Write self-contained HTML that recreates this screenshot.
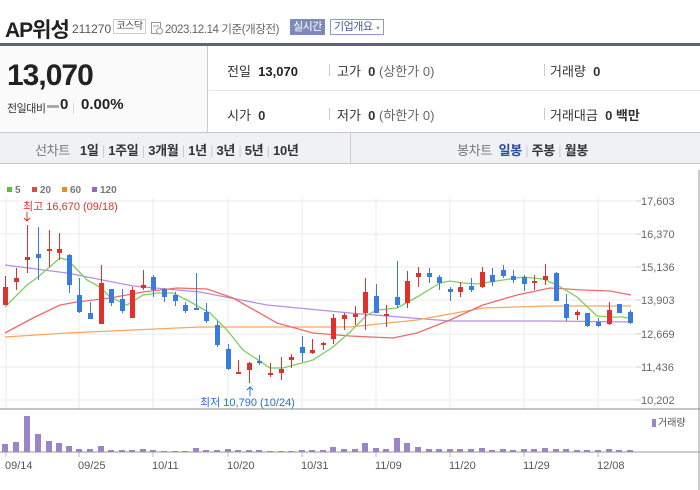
<!DOCTYPE html>
<html><head><meta charset="utf-8"><style>
*{margin:0;padding:0;box-sizing:border-box}
body{width:700px;height:490px;background:#fff;font-family:"Liberation Sans","Noto Sans CJK KR",sans-serif;position:relative;overflow:hidden;color:#333}
.a{position:absolute;white-space:nowrap}
</style></head><body>
<div class="a" style="left:5px;top:14px;font-size:21px;font-weight:bold;color:#222;letter-spacing:-1px">AP위성</div>
<div class="a" style="left:72px;top:22px;font-size:12px;color:#555">211270</div>
<div class="a" style="left:113px;top:19px;width:33px;height:15px;border:1px solid #ccc;font-size:10px;color:#444;text-align:center;line-height:13px;letter-spacing:-0.5px">코스닥</div>
<svg class="a" style="left:151px;top:22px" width="12" height="13"><rect x="0.5" y="0.5" width="9" height="11" fill="none" stroke="#999"/><line x1="2" y1="4" x2="8" y2="4" stroke="#999"/><circle cx="8.5" cy="9" r="3" fill="#fff" stroke="#999"/></svg>
<div class="a" style="left:165px;top:21px;font-size:11.5px;color:#666;letter-spacing:-0.4px">2023.12.14 기준(개장전)</div>
<div class="a" style="left:290px;top:19px;width:35px;height:16px;background:#7d8bbc;color:#fff;font-size:11px;text-align:center;line-height:16px;letter-spacing:-0.5px">실시간</div>
<div class="a" style="left:330px;top:19px;width:54px;height:16px;border:1px solid #8c9bc8;color:#4a5a9a;font-size:11px;line-height:14px;padding-left:3px;letter-spacing:-0.5px">기업개요 <span style="font-size:6px;color:#99a">▼</span></div>
<div class="a" style="left:0;top:43px;width:700px;height:3px;background:#5f6470"></div>
<div class="a" style="left:0;top:46px;width:208px;height:86px;background:#fafafa;border-right:1px solid #ccc"></div>
<div class="a" style="left:7px;top:59px;font-size:30px;font-weight:bold;color:#222;letter-spacing:-1px">13,070</div>
<div class="a" style="left:7px;top:100px;font-size:11px;color:#333;letter-spacing:-0.5px">전일대비</div>
<div class="a" style="left:47px;top:105px;width:12px;height:3px;background:#aaa"></div>
<div class="a" style="left:60px;top:96px;font-size:15px;font-weight:bold;color:#222">0</div>
<div class="a" style="left:73px;top:103px;width:1px;height:11px;background:#ddd"></div>
<div class="a" style="left:81px;top:96px;font-size:15px;font-weight:bold;color:#222">0.00%</div>
<div class="a" style="left:209px;top:90px;width:491px;height:1px;background:#e4e4e4"></div>
<div class="a" style="left:227px;top:61px;font-size:13px;color:#333">전일 &nbsp;<b style="color:#222">13,070</b></div>
<div class="a" style="left:329px;top:64px;width:1px;height:12px;background:#ccc"></div>
<div class="a" style="left:337px;top:61px;font-size:13px;color:#333">고가 &nbsp;<b>0</b> <span style="color:#666">(상한가 0)</span></div>
<div class="a" style="left:544px;top:64px;width:1px;height:12px;background:#ccc"></div>
<div class="a" style="left:550px;top:61px;font-size:13px;color:#333">거래량 &nbsp;<b>0</b></div>
<div class="a" style="left:227px;top:105px;font-size:13px;color:#333">시가 &nbsp;<b>0</b></div>
<div class="a" style="left:329px;top:108px;width:1px;height:12px;background:#ccc"></div>
<div class="a" style="left:337px;top:105px;font-size:13px;color:#333">저가 &nbsp;<b>0</b> <span style="color:#666">(하한가 0)</span></div>
<div class="a" style="left:544px;top:108px;width:1px;height:12px;background:#ccc"></div>
<div class="a" style="left:550px;top:105px;font-size:13px;color:#333">거래대금 &nbsp;<b>0 백만</b></div>
<div class="a" style="left:0;top:132px;width:700px;height:32px;background:#f0f1f5;border-top:1px solid #c8c8c8;border-bottom:1px solid #c8c8c8"></div>
<div class="a" style="left:350px;top:133px;width:1px;height:30px;background:#ccc"></div>
<div class="a" style="left:35px;top:140px;font-size:13px;color:#777;letter-spacing:-0.3px">선차트 &nbsp;&nbsp;<b style="color:#333">1일</b> <span style="color:#ccc">|</span> <b style="color:#333">1주일</b> <span style="color:#ccc">|</span> <b style="color:#333">3개월</b> <span style="color:#ccc">|</span> <b style="color:#333">1년</b> <span style="color:#ccc">|</span> <b style="color:#333">3년</b> <span style="color:#ccc">|</span> <b style="color:#333">5년</b> <span style="color:#ccc">|</span> <b style="color:#333">10년</b></div>
<div class="a" style="left:457px;top:140px;font-size:13px;color:#777;letter-spacing:-0.3px">봉차트 &nbsp;<b style="color:#2a4a9a">일봉</b> <span style="color:#ccc">|</span> <b style="color:#333">주봉</b> <span style="color:#ccc">|</span> <b style="color:#333">월봉</b></div>
<svg class="a" style="left:0;top:0" width="700" height="490" id="ch" font-family="Liberation Sans, Noto Sans CJK KR, sans-serif"></svg>
<script>
var s='';
function R(x,y,w,h,c){s+='<rect x="'+x+'" y="'+y+'" width="'+w+'" height="'+h+'" fill="'+c+'"/>';}
[['#5bbd3c','5',7],['#e94545','20',32],['#f28a1c','60',62],['#9c5fce','120',92]].forEach(function(l){R(l[2],187,5,5,l[0]);s+='<text x="'+(l[2]+8)+'" y="193" font-size="10" font-weight="bold" fill="#777">'+l[1]+'</text>';});
var gy=[201,234,267,300,334,367,400],gl=['17,603','16,370','15,136','13,903','12,669','11,436','10,202'];
gy.forEach(function(y,i){s+='<line x1="0" y1="'+y+'" x2="636" y2="'+y+'" stroke="#ebebeb"/><line x1="636" y1="'+y+'" x2="641" y2="'+y+'" stroke="#ccc"/><text x="641" y="'+(y+4)+'" font-size="11" fill="#666">'+gl[i]+'</text>';});
var vx=[6,79,153,228,302,376,450,524,598],vl=['09/14','09/25','10/11','10/20','10/31','11/09','11/20','11/29','12/08'];
vx.forEach(function(x,i){s+='<line x1="'+x+'" y1="198" x2="'+x+'" y2="409" stroke="#ebebeb"/><line x1="'+x+'" y1="452" x2="'+x+'" y2="457" stroke="#bbb"/><text x="'+(x-1)+'" y="469" font-size="11" fill="#555">'+vl[i]+'</text>';});
s+='<line x1="0" y1="409" x2="700" y2="409" stroke="#888"/><line x1="0" y1="452" x2="700" y2="452" stroke="#999"/><line x1="699" y1="170" x2="699" y2="490" stroke="#999"/>';
function P(pts,c){s+='<polyline fill="none" stroke="'+c+'" stroke-width="1.3" points="'+pts+'"/>';}
P('5,265 67,273 133,286 200,292 267,305 350,313 450,321 550,321 631,322','#b98ee0');
P('5,337 67,333 133,330 200,327 350,327 417,320 483,308 550,306 631,306','#f7a860');
P('5,333 33,318 60,305 77,302 110,298 143,292 177,288 207,289 233,298 277,323 313,333 350,336 393,338 417,333 450,320 483,305 517,295 550,288 583,290 610,291 631,295','#ef6b6b');
P('5,307 27,285 38,277 60,258 68,260 87,280 100,287 110,297 127,305 143,295 157,293 173,293 187,300 210,313 227,330 243,350 270,368 283,368 313,360 333,347 350,332 367,315 377,310 397,308 417,297 440,283 450,281 463,283 477,284 503,280 523,277 543,279 557,285 577,297 597,316 610,317 623,317 632,319','#7ccf5e');
var r='#e0312c',b='#3a7be0';
var C=[[5,287,305,276,305,r],[16,278,282,268,290,r],[27,257,260,225,273,r],[38,254,258,227,280,b],[49,249,251,230,267,r],[59,249,253,233,260,r],[69,255,285,254,293,b],[79,295,312,278,313,b],[90,313,319,302,319,b],[101,283,324,265,324,r],[111,289,303,289,306,b],[122,299,311,289,313,b],[132,290,318,287,318,r],[143,285,288,270,290,r],[153,277,290,275,297,b],[164,289,297,288,302,b],[175,295,301,292,306,b],[185,305,311,302,313,b],[196,308,309,273,309,b],[206,312,321,303,323,b],[217,325,345,321,347,b],[228,349,369,344,370,b],[238,372,373,360,374,r],[249,363,370,362,383,r],[259,361,363,355,365,b],[270,373,374,363,377,r],[281,369,373,357,380,r],[291,357,360,354,368,r],[302,347,353,336,362,b],[312,350,353,339,354,r],[323,343,344,342,350,r],[333,318,339,314,344,r],[344,315,319,313,330,r],[355,314,317,306,325,r],[365,292,313,278,330,r],[376,296,313,284,313,b],[386,314,316,305,327,r],[397,297,305,261,308,b],[407,281,303,271,308,r],[418,273,277,267,287,r],[429,273,277,268,283,b],[439,277,283,275,290,b],[450,289,292,287,301,b],[460,287,292,282,297,r],[471,286,290,278,292,b],[482,272,287,267,288,r],[492,275,282,268,286,b],[503,270,276,265,278,b],[513,276,280,270,283,b],[524,277,284,275,291,b],[534,281,283,275,290,r],[545,276,280,264,285,r],[556,273,301,272,301,b],[566,304,318,294,321,b],[577,312,315,310,320,r],[587,313,326,313,327,b],[598,322,326,318,327,b],[609,310,324,302,325,r],[619,304,313,304,313,b],[630,312,323,310,324,b]];
C.forEach(function(c){s+='<line x1="'+(c[0]+.5)+'" y1="'+c[3]+'" x2="'+(c[0]+.5)+'" y2="'+c[4]+'" stroke="'+c[5]+'"/>';R(c[0]-2,c[1],5,Math.max(2,c[2]-c[1]),c[5]);});
s+='<text x="23" y="210" font-size="11" fill="#e0312c">최고 16,670 (09/18)</text><path d="M27 212v9M24 218l3 3 3-3" stroke="#e0312c" fill="none"/>';
s+='<text x="200" y="406" font-size="11" fill="#2d6fd6">최저 10,790 (10/24)</text><path d="M250 396v-9M247 390l3-3 3 3" stroke="#2d6fd6" fill="none"/>';
var V=[444,442,416,434,441,443,446,449,449,446,450,450,450,449,450,451,451,451,448,450,450,449,450,450,450,451,451,451,450,450,450,447,449,449,443,448,449,438,443,447,449,449,449,449,449,448,450,449,450,449,449,448,449,449,450,450,450,449,450,450];
V.forEach(function(t,i){R(C[i][0]-3,t,6,452-t,'#9b85c6');});
R(652,419,4,8,'#9b85c6');s+='<text x="658" y="426" font-size="10" fill="#555">거래량</text>';
document.getElementById('ch').innerHTML=s;
</script>
</body></html>
